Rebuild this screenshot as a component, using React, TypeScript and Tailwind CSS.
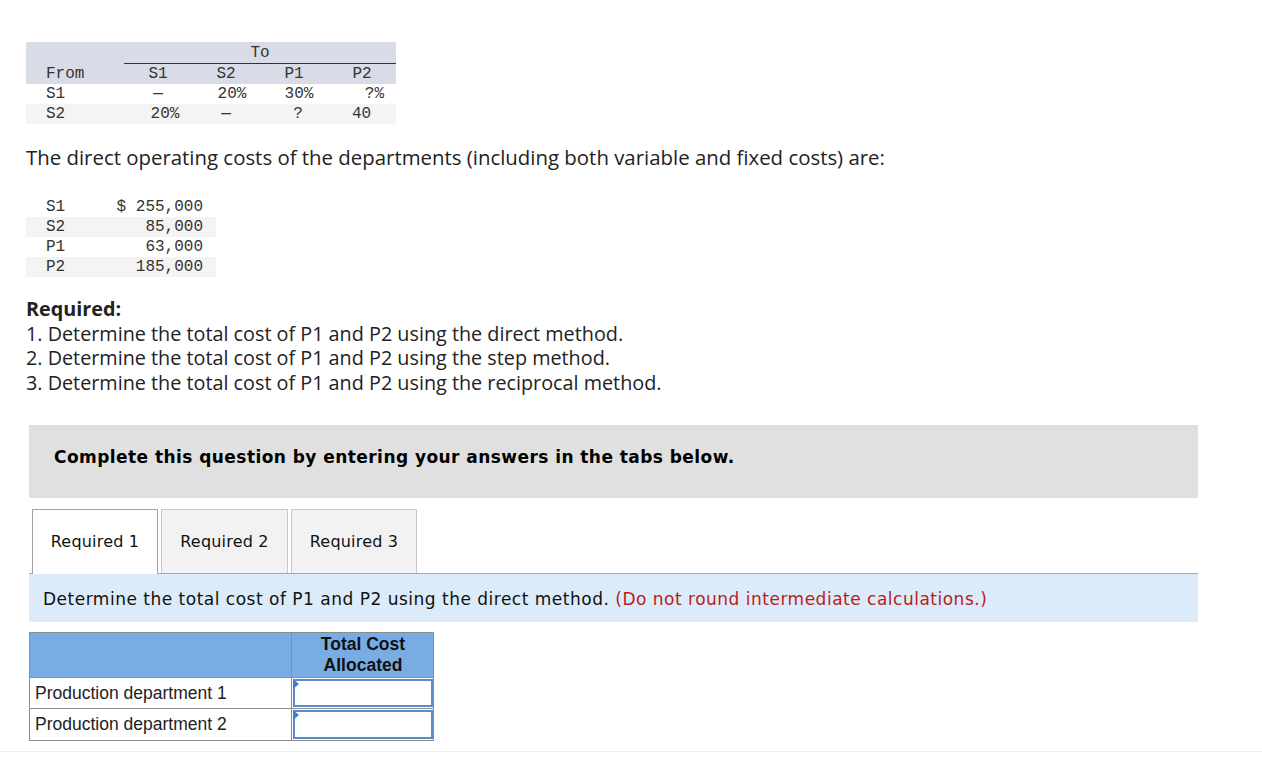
import React from "react";

const mono = "font-['Liberation_Mono','DejaVu_Sans_Mono',monospace]";
const verdana = "font-['DejaVu_Sans','Verdana',sans-serif]";
const arial = "font-['Liberation_Sans','Arial',sans-serif]";
const body = "font-['Open_Sans','Liberation_Sans',sans-serif]";

const costs = [
  { dept: "S1", amount: "$ 255,000", shade: false },
  { dept: "S2", amount: "85,000", shade: true },
  { dept: "P1", amount: "63,000", shade: false },
  { dept: "P2", amount: "185,000", shade: true },
];

const requirements = [
  "1. Determine the total cost of P1 and P2 using the direct method.",
  "2. Determine the total cost of P1 and P2 using the step method.",
  "3. Determine the total cost of P1 and P2 using the reciprocal method.",
];

function AllocationTable() {
  const row = "grid grid-cols-[98px_68px_68px_68px_68px] h-[20px] items-center";
  return (
    <div className={`w-[370px] text-[16px] leading-[20px] text-[#333] ${mono}`}>
      {/* header */}
      <div className="bg-[#d8dce6]">
        <div className="grid grid-cols-[98px_272px] h-[21px]">
          <div />
          <div className="text-center border-b border-[#333] pt-[1px]">To</div>
        </div>
        <div className={row + " h-[21px]"}>
          <div className="pl-[20px]">From</div>
          <div className="text-center">S1</div>
          <div className="text-center">S2</div>
          <div className="text-center">P1</div>
          <div className="text-center">P2</div>
        </div>
      </div>
      <div className={row}>
        <div className="pl-[20px]">S1</div>
        <div className="text-center">—</div>
        <div className="text-center pl-[12px]">20%</div>
        <div className="text-center pl-[10px]">30%</div>
        <div className="text-right pr-[12px]">?%</div>
      </div>
      <div className={row + " bg-[#f4f4f4]"}>
        <div className="pl-[20px]">S2</div>
        <div className="text-center pl-[14px]">20%</div>
        <div className="text-center">—</div>
        <div className="text-center pl-[8px]">?</div>
        <div className="pl-[24px]">40</div>
      </div>
    </div>
  );
}

function CostTable() {
  return (
    <div className={`w-[190px] text-[16px] leading-[20px] text-[#333] ${mono}`}>
      {costs.map((c) => (
        <div
          key={c.dept}
          className={`flex justify-between h-[20px] items-center pl-[20px] pr-[13px] ${c.shade ? "bg-[#f4f4f4]" : ""}`}
        >
          <span>{c.dept}</span>
          <span>{c.amount}</span>
        </div>
      ))}
    </div>
  );
}

function AnswerInput() {
  return (
    <div className="relative h-full p-[1px]">
      <div className="h-full border-2 border-[#5b8bc9] bg-white" />
      <div className="absolute left-[1px] top-[1px] w-0 h-0 border-t-[5px] border-b-[5px] border-l-[6px] border-t-transparent border-b-transparent border-l-[#3f7fd0]" />
    </div>
  );
}

function AnswerTable() {
  const cell = "border-[#8c8c8c]";
  return (
    <div className={`w-[405px] border border-[#8c8c8c] text-[17.5px] text-[#222] ${arial}`}>
      <div className="grid grid-cols-[262px_142px] h-[45px] bg-[#7aace4] border-b border-[#8c8c8c]">
        <div className={`border-r ${cell}`} />
        <div className="text-center font-bold leading-[21px] pt-[1px] text-[#111]">
          Total Cost
          <br />
          Allocated
        </div>
      </div>
      {["Production department 1", "Production department 2"].map((label, i) => (
        <div
          key={label}
          className={`grid grid-cols-[262px_142px] h-[31px] ${i === 0 ? "border-b border-[#8c8c8c]" : ""}`}
        >
          <div className={`border-r ${cell} pl-[5px] flex items-center`}>{label}</div>
          <AnswerInput />
        </div>
      ))}
    </div>
  );
}

export default function App() {
  return (
    <div className="w-[1262px] h-[757px] bg-white overflow-hidden">
      <div className="pl-[26px] pt-[42px] pb-[10px] border-b border-[#ededed]">
        <AllocationTable />

        <p className={`mt-[21px] text-[20.4px] leading-[24px] text-[#222] ${body}`}>
          The direct operating costs of the departments (including both variable and fixed costs) are:
        </p>

        <div className="mt-[28px]">
          <CostTable />
        </div>

        <div className={`mt-[20px] text-[19.8px] leading-[24.5px] text-[#222] ${body}`}>
          <div className="font-bold">Required:</div>
          {requirements.map((r) => (
            <div key={r}>{r}</div>
          ))}
        </div>

        <div className={`ml-[3px] mt-[30px] w-[1169px] h-[73px] bg-[#e0e0e0] pl-[25px] pt-[21px] ${verdana}`}>
          <span className="text-[17px] tracking-[0.44px] leading-[20px] font-bold text-black">
            Complete this question by entering your answers in the tabs below.
          </span>
        </div>

        <div className={`ml-[3px] w-[1169px] mt-[11px] ${verdana}`}>
          <div className="flex gap-[3px] pl-[3px] h-[64px] items-end">
            <div className="relative z-10 -mb-px h-[65px] w-[126px] bg-white border border-b-0 border-[#a3a3a3] flex items-center justify-center text-[16px] tracking-[0.2px] text-[#111] pb-px">
              Required 1
            </div>
            <div className="h-[64px] w-[127px] bg-[#f2f2f2] border border-b-0 border-[#c8c8c8] flex items-center justify-center text-[16px] tracking-[0.2px] text-[#111]">
              Required 2
            </div>
            <div className="h-[64px] w-[126px] bg-[#f2f2f2] border border-b-0 border-[#c8c8c8] flex items-center justify-center text-[16px] tracking-[0.2px] text-[#111]">
              Required 3
            </div>
          </div>
          <div className="h-[49px] bg-[#dcebf9] border-t border-[#a8a8a8] pl-[14px] flex items-center text-[17px] tracking-[0.5px] text-[#111] pt-[3px]">
            <span>
              Determine the total cost of P1 and P2 using the direct method.{" "}
              <span className="text-[#b81c1c]">(Do not round intermediate calculations.)</span>
            </span>
          </div>
        </div>

        <div className="ml-[3px] mt-[10px]">
          <AnswerTable />
        </div>
      </div>
    </div>
  );
}
